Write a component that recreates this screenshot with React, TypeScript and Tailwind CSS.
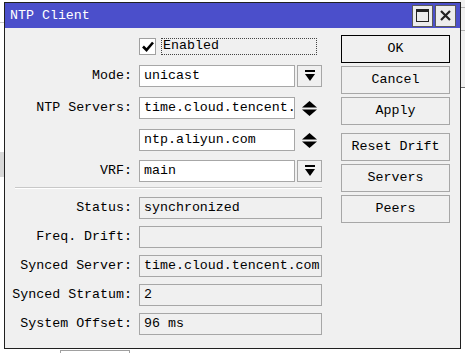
import React from 'react';

const font = { fontFamily: '"Liberation Mono", "DejaVu Sans Mono", monospace' };

const DropIcon = () => (
  <svg width="10" height="12" viewBox="0 0 10 12">
    <rect x="0" y="0" width="10" height="2" fill="#000" />
    <path d="M0 4 H10 L5 11 Z" fill="#000" />
  </svg>
);

const UpDown = () => (
  <svg width="15" height="15" viewBox="0 0 15 15" className="ml-[7px]">
    <path d="M0 6.5 L7.5 0 L15 6.5 Z" fill="#000" />
    <path d="M0 8.5 H15 L7.5 15 Z" fill="#000" />
  </svg>
);

const Label: React.FC<{ text: string }> = ({ text }) => (
  <div className="w-[128px] text-right pr-[1px] whitespace-pre">{text}</div>
);

const Field: React.FC<{ value: string; readOnly?: boolean; w: string }> = ({ value, readOnly, w }) => (
  <div
    className={`${w} h-[22px] ml-[6px] border border-[#a7a7a7] ${readOnly ? 'bg-[#f0f0f0]' : 'bg-white'} pl-[4px] flex items-center overflow-hidden whitespace-nowrap`}
  >
    {value}
  </div>
);

const Btn: React.FC<{ text: string; primary?: boolean; className?: string }> = ({ text, primary, className }) => (
  <div
    className={`h-[28px] w-[109px] flex items-center justify-center bg-[#f0f0f0] ${
      primary ? 'border border-black' : 'border border-[#a7a7a7]'
    } ${className ?? ''}`}
  >
    {text}
  </div>
);

export default function App() {
  return (
    <div className="relative w-[465px] h-[353px] bg-white overflow-hidden text-[13.3px] text-black" style={font}>
      {/* desktop bits behind the window */}
      <div className="absolute left-0 top-[22px] w-[5px] h-px bg-[#c8c8c8]" />
      <div className="absolute left-0 top-[152px] w-[5px] h-[25px] bg-[#d8d8d8]" />
      <div className="absolute left-[460px] top-0 w-[5px] h-[87px] bg-[#f0f0f0]" />
      <div className="absolute left-[460px] top-[7px] w-[5px] h-px bg-[#b0b0b0]" />
      <div className="absolute left-[460px] top-[30px] w-[5px] h-px bg-[#b0b0b0]" />
      <div className="absolute left-[460px] top-[87px] w-[5px] h-px bg-[#707070]" />
      <div className="absolute left-[60px] top-[350px] w-[70px] h-[3px] border-t border-l border-r border-[#a0a0a0]" />

      {/* window */}
      <div className="absolute left-[4px] top-[2px] w-[457px] h-[347px] border border-[#202020] bg-[#f0f0f0] flex flex-col">
        <div className="h-[25px] bg-[#4b4fcb] flex items-center pl-[5px] pr-[4px]">
          <span className="text-white">NTP Client</span>
          <div className="ml-auto flex gap-[2px]">
            <div className="w-[21px] h-[22px] bg-[#ececec] border border-[#5a5a5a] flex items-center justify-center">
              <div className="w-[13px] h-[13px] border border-[#222] border-t-[3px]" />
            </div>
            <div className="w-[21px] h-[22px] bg-[#ececec] border border-[#5a5a5a] flex items-center justify-center">
              <svg width="11" height="11" viewBox="0 0 11 11">
                <path d="M1 1 L10 10 M10 1 L1 10" stroke="#222" strokeWidth="2.2" />
              </svg>
            </div>
          </div>
        </div>

        <div className="flex">
          {/* form */}
          <div className="w-[318px] flex flex-col">
            <div className="flex items-center mt-[9px] h-[18px]">
              <div className="w-[128px]" />
              <div className="ml-[6px] w-[17px] h-[17px] border border-[#a0a0a0] bg-white flex items-center justify-center">
                <svg width="12" height="11" viewBox="0 0 12 11">
                  <path d="M1 5.5 L4.5 9 L11 1.5" stroke="#000" strokeWidth="2.6" fill="none" />
                </svg>
              </div>
              <div className="ml-[5px] w-[156px] h-[17px] border border-dotted border-[#444] flex items-center pl-px">
                Enabled
              </div>
            </div>

            <div className="flex items-center mt-[10px]">
              <Label text="Mode:" />
              <Field value="unicast" w="w-[156px]" />
              <div className="ml-[2px] w-[25px] h-[22px] border border-[#a7a7a7] flex items-center justify-center">
                <DropIcon />
              </div>
            </div>

            <div className="flex items-center mt-[10px]">
              <Label text="NTP Servers:" />
              <Field value="time.cloud.tencent.com" w="w-[156px]" />
              <UpDown />
            </div>

            <div className="flex items-center mt-[10px]">
              <Label text="" />
              <Field value="ntp.aliyun.com" w="w-[156px]" />
              <UpDown />
            </div>

            <div className="flex items-center mt-[9px]">
              <Label text="VRF:" />
              <Field value="main" w="w-[156px]" />
              <div className="ml-[2px] w-[25px] h-[22px] border border-[#a7a7a7] flex items-center justify-center">
                <DropIcon />
              </div>
            </div>

            <div className="ml-[10px] w-[307px] mt-[5px] border-t border-[#c8c8c8] border-b border-b-white" />

            <div className="flex items-center mt-[8px]">
              <Label text="Status:" />
              <Field value="synchronized" readOnly w="w-[183px]" />
            </div>
            <div className="flex items-center mt-[7px]">
              <Label text="Freq. Drift:" />
              <Field value="" readOnly w="w-[183px]" />
            </div>
            <div className="flex items-center mt-[7px]">
              <Label text="Synced Server:" />
              <Field value="time.cloud.tencent.com" readOnly w="w-[183px]" />
            </div>
            <div className="flex items-center mt-[7px]">
              <Label text="Synced Stratum:" />
              <Field value="2" readOnly w="w-[183px]" />
            </div>
            <div className="flex items-center mt-[7px]">
              <Label text="System Offset:" />
              <Field value="96 ms" readOnly w="w-[183px]" />
            </div>
          </div>

          {/* buttons */}
          <div className="ml-[18px] mt-[7px] flex flex-col">
            <Btn text="OK" primary />
            <Btn text="Cancel" className="mt-[3px]" />
            <Btn text="Apply" className="mt-[3px]" />
            <Btn text="Reset Drift" className="mt-[8px]" />
            <Btn text="Servers" className="mt-[3px]" />
            <Btn text="Peers" className="mt-[3px]" />
          </div>
        </div>
      </div>
    </div>
  );
}
